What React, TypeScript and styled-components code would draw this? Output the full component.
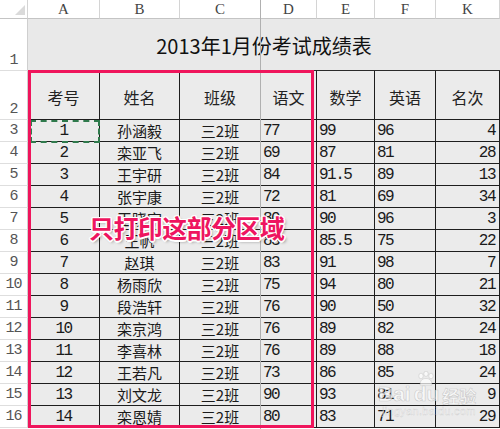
import React from "react";
import styled, { createGlobalStyle } from "styled-components";

const Global = createGlobalStyle`
  html, body { margin: 0; padding: 0; background: #ffffff; }
  body { width: 500px; height: 429px; overflow: hidden; }
`;

const Page = styled.div`
  position: relative;
  width: 500px;
  height: 429px;
  overflow: hidden;
  background: #ffffff;
`;

const Sheet = styled.div`
  display: grid;
  grid-template-columns: 28px 72px 80px 81px 56px 58px 61px 64px;
  grid-template-rows: 19px 52px 49px repeat(14, 22px);
  box-sizing: border-box;
`;

const Corner = styled.div`
  position: relative;
  border-right: 1px solid #d4d4d4;
  border-bottom: 1px solid #c4c4c4;
  &::after {
    content: "";
    position: absolute;
    right: 2px;
    bottom: 3px;
    width: 0;
    height: 0;
    border-left: 10px solid transparent;
    border-bottom: 10px solid #dadada;
  }
`;

const ColLetter = styled.div`
  display: flex;
  align-items: center;
  justify-content: center;
  border-right: 1px solid #d4d4d4;
  border-bottom: 1px solid #c4c4c4;
  font: 15px/1 "Liberation Serif", serif;
  color: #444444;
  padding-top: 1px;
`;

const RowNum = styled.div<{ $tall?: boolean }>`
  display: flex;
  justify-content: center;
  align-items: ${(p) => (p.$tall ? "flex-end" : "center")};
  padding-bottom: ${(p) => (p.$tall ? "2px" : "0")};
  border-right: 1px solid #cfcfcf;
  border-bottom: 1px solid #dedede;
  font: 15px/1 "Liberation Mono", monospace;
  letter-spacing: -1px;
  color: #555555;
`;

const Title = styled.div`
  grid-column: 2 / 9;
  display: flex;
  align-items: center;
  justify-content: center;
  padding-top: 3px;
  background: #e9e9e9;
  border-bottom: 1px solid #2a2a2a;
  font: 20px/1 "Noto Sans CJK SC", sans-serif;
  color: #111111;
`;

const HeadCell = styled.div<{ $soft?: boolean }>`
  display: flex;
  align-items: center;
  justify-content: center;
  padding-top: 4px;
  background: #ebebeb;
  border-right: 1px solid ${(p) => (p.$soft ? "#b8b8b8" : "#1e1e1e")};
  border-bottom: 1px solid #1e1e1e;
  font: 16px/1 "Noto Sans CJK SC", sans-serif;
  color: #222222;
`;

type Align = "center" | "left" | "right";

const DataCell = styled.div<{ $align: Align; $mono?: boolean; $soft?: boolean }>`
  display: flex;
  align-items: center;
  justify-content: ${(p) =>
    p.$align === "center" ? "center" : p.$align === "left" ? "flex-start" : "flex-end"};
  padding: ${(p) => (p.$align === "left" ? "0 0 0 2px" : p.$align === "right" ? "0 4px 0 0" : "0")};
  background: #ebebeb;
  border-right: 1px solid ${(p) => (p.$soft ? "#b8b8b8" : "#1e1e1e")};
  border-bottom: 1px solid #1e1e1e;
  font: ${(p) =>
    p.$mono
      ? `16px/1 "Liberation Mono", monospace`
      : `15px/1 "Noto Sans CJK SC", sans-serif`};
  letter-spacing: ${(p) => (p.$mono ? "-1.5px" : "0")};
  color: #1a1a1a;
  white-space: nowrap;
`;

const PageBreak = styled.div`
  position: absolute;
  left: 260px;
  top: 0;
  width: 1px;
  height: 429px;
  background: #b0b0b0;
`;

const Marquee = styled.div`
  position: absolute;
  left: 30px;
  top: 120px;
  width: 70px;
  height: 23px;
  box-sizing: border-box;
  border: 2px dashed #2f7a4c;
`;

const PrintArea = styled.div`
  position: absolute;
  left: 28px;
  top: 70px;
  width: 286px;
  height: 358px;
  box-sizing: border-box;
  border: 3px solid #ef155c;
`;

const Note = styled.div`
  position: absolute;
  left: 89px;
  top: 215px;
  font: 700 25px/1 "Noto Sans CJK SC", sans-serif;
  letter-spacing: -0.6px;
  color: #ee1560;
  white-space: nowrap;
  text-shadow: 1.5px 0 0 #fff, -1.5px 0 0 #fff, 0 1.5px 0 #fff, 0 -1.5px 0 #fff,
    1px 1px 0 #fff, -1px -1px 0 #fff, 1px -1px 0 #fff, -1px 1px 0 #fff,
    2px 2px 3px rgba(0, 0, 0, 0.35);
`;

const Watermark = styled.div`
  position: absolute;
  left: 378px;
  top: 371px;
  width: 100px;
  display: flex;
  flex-direction: column;
  align-items: flex-start;
  opacity: 0.8;
`;

const MarkRow = styled.div`
  position: relative;
  display: flex;
  align-items: flex-end;
  gap: 3px;
  padding-top: 12px;
`;

const MarkWord = styled.span<{ $cjk?: boolean }>`
  font: ${(p) =>
    p.$cjk ? `700 17px/1 "Noto Sans CJK SC", sans-serif` : `700 21px/1 "Liberation Sans", sans-serif`};
  color: rgba(255, 255, 255, 0.85);
  -webkit-text-stroke: 0.6px rgba(150, 150, 150, 0.55);
`;

const Paw = styled.svg`
  position: absolute;
  left: 38px;
  top: 0;
`;

const MarkUrl = styled.span`
  margin-top: 2px;
  margin-left: 4px;
  font: 11px/1 "Liberation Sans", sans-serif;
  color: rgba(255, 255, 255, 0.8);
  -webkit-text-stroke: 0.4px rgba(150, 150, 150, 0.45);
  letter-spacing: 0.3px;
`;

const letters = ["A", "B", "C", "D", "E", "F", "K"];
const heads = ["考号", "姓名", "班级", "语文", "数学", "英语", "名次"];

const rows: (string | number)[][] = [
  [1, "孙涵毅", "三2班", 77, 99, 96, 4],
  [2, "栾亚飞", "三2班", 69, 87, 81, 28],
  [3, "王宇研", "三2班", 84, "91.5", 89, 13],
  [4, "张宇康", "三2班", 72, 81, 69, 34],
  [5, "王晓宇", "三2班", 80, 90, 96, 3],
  [6, "王帆", "三2班", 83, "85.5", 75, 22],
  [7, "赵琪", "三2班", 83, 91, 98, 7],
  [8, "杨雨欣", "三2班", 75, 94, 80, 21],
  [9, "段浩轩", "三2班", 76, 90, 50, 32],
  [10, "栾京鸿", "三2班", 76, 89, 82, 24],
  [11, "李喜林", "三2班", 76, 89, 88, 18],
  [12, "王若凡", "三2班", 73, 86, 85, 24],
  [13, "刘文龙", "三2班", 90, 93, 81, 9],
  [14, "栾恩婧", "三2班", 80, 83, 71, 29],
];

const aligns: Align[] = ["center", "center", "center", "left", "left", "left", "right"];

export default function App() {
  return (
    <Page>
      <Global />
      <Sheet>
        <Corner />
        {letters.map((l) => (
          <ColLetter key={l}>{l}</ColLetter>
        ))}

        <RowNum $tall>1</RowNum>
        <Title>2013年1月份考试成绩表</Title>

        <RowNum $tall>2</RowNum>
        {heads.map((h, i) => (
          <HeadCell key={h} $soft={i === 2}>
            {h}
          </HeadCell>
        ))}

        {rows.map((r, ri) => (
          <React.Fragment key={ri}>
            <RowNum>{ri + 3}</RowNum>
            {r.map((v, ci) => (
              <DataCell
                key={ci}
                $align={aligns[ci]}
                $mono={typeof v === "number" || /^[0-9.]+$/.test(String(v))}
                $soft={ci === 2}
              >
                {v}
              </DataCell>
            ))}
          </React.Fragment>
        ))}
      </Sheet>

      <PageBreak />
      <Marquee />
      <PrintArea />
      <Note>只打印这部分区域</Note>

      <Watermark>
        <MarkRow>
          <Paw width="20" height="16" viewBox="0 0 20 16">
            <g fill="rgba(255,255,255,0.9)" stroke="rgba(150,150,150,0.5)" strokeWidth="0.6">
              <ellipse cx="5" cy="5" rx="2.2" ry="2.8" />
              <ellipse cx="10" cy="2.8" rx="2.2" ry="2.6" />
              <ellipse cx="15" cy="5" rx="2.2" ry="2.8" />
              <path d="M4 14 C4 9 7 7.5 10 7.5 C13 7.5 16 9 16 14 Z" />
            </g>
          </Paw>
          <MarkWord>Bai</MarkWord>
          <MarkWord>du</MarkWord>
          <MarkWord $cjk>经验</MarkWord>
        </MarkRow>
        <MarkUrl>jingyan.baidu.com</MarkUrl>
      </Watermark>
    </Page>
  );
}
